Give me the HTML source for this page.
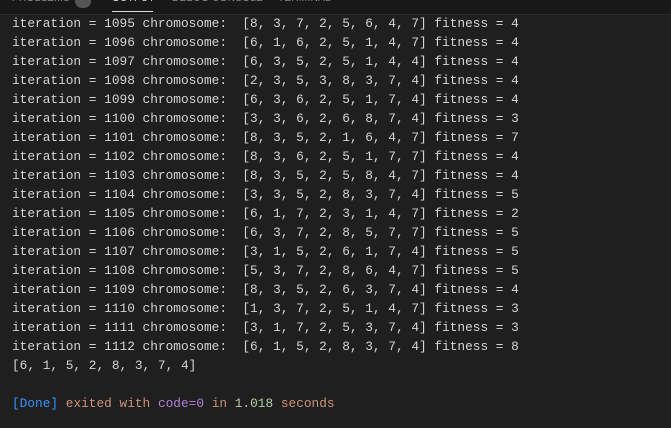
<!DOCTYPE html>
<html><head><style>
body{margin:0;width:671px;height:428px;background:#1f1f1f;overflow:hidden;font-family:"Liberation Mono",monospace;}
.hdr{position:absolute;left:0;top:0;width:671px;height:14px;background:#181818;border-bottom:1px solid #2b2b2b;}
.tab{position:absolute;top:-7px;font:10px "Liberation Sans",sans-serif;color:#8a8a8a;letter-spacing:.3px}
.badge{position:absolute;left:75px;top:-6px;width:16px;height:14px;border-radius:7px;background:#555;}
.ul{position:absolute;left:112px;top:11px;width:41px;height:1px;background:#e0e0e0}
pre{position:absolute;left:12px;top:14px;margin:0;font:12.8px/19px "Liberation Mono",monospace;color:#d4d4d4;}
.b{color:#3794ff}.o{color:#ce9178}.p{color:#b180d7}.g{color:#b5cea8}
</style></head><body>
<div class="hdr"><span class="tab" style="left:12px">PROBLEMS</span><div class="badge"></div><span class="tab" style="left:112px;color:#e0e0e0">OUTPUT</span><span class="tab" style="left:172px">DEBUG CONSOLE</span><span class="tab" style="left:278px">TERMINAL</span><div class="ul"></div></div>
<pre>iteration = 1095 chromosome:  [8, 3, 7, 2, 5, 6, 4, 7] fitness = 4
iteration = 1096 chromosome:  [6, 1, 6, 2, 5, 1, 4, 7] fitness = 4
iteration = 1097 chromosome:  [6, 3, 5, 2, 5, 1, 4, 4] fitness = 4
iteration = 1098 chromosome:  [2, 3, 5, 3, 8, 3, 7, 4] fitness = 4
iteration = 1099 chromosome:  [6, 3, 6, 2, 5, 1, 7, 4] fitness = 4
iteration = 1100 chromosome:  [3, 3, 6, 2, 6, 8, 7, 4] fitness = 3
iteration = 1101 chromosome:  [8, 3, 5, 2, 1, 6, 4, 7] fitness = 7
iteration = 1102 chromosome:  [8, 3, 6, 2, 5, 1, 7, 7] fitness = 4
iteration = 1103 chromosome:  [8, 3, 5, 2, 5, 8, 4, 7] fitness = 4
iteration = 1104 chromosome:  [3, 3, 5, 2, 8, 3, 7, 4] fitness = 5
iteration = 1105 chromosome:  [6, 1, 7, 2, 3, 1, 4, 7] fitness = 2
iteration = 1106 chromosome:  [6, 3, 7, 2, 8, 5, 7, 7] fitness = 5
iteration = 1107 chromosome:  [3, 1, 5, 2, 6, 1, 7, 4] fitness = 5
iteration = 1108 chromosome:  [5, 3, 7, 2, 8, 6, 4, 7] fitness = 5
iteration = 1109 chromosome:  [8, 3, 5, 2, 6, 3, 7, 4] fitness = 4
iteration = 1110 chromosome:  [1, 3, 7, 2, 5, 1, 4, 7] fitness = 3
iteration = 1111 chromosome:  [3, 1, 7, 2, 5, 3, 7, 4] fitness = 3
iteration = 1112 chromosome:  [6, 1, 5, 2, 8, 3, 7, 4] fitness = 8
[6, 1, 5, 2, 8, 3, 7, 4]

<span class="b">[Done]</span> <span class="o">exited with</span> <span class="p">code=0</span> <span class="o">in</span> <span class="g">1.018</span> <span class="o">seconds</span></pre>
</body></html>
